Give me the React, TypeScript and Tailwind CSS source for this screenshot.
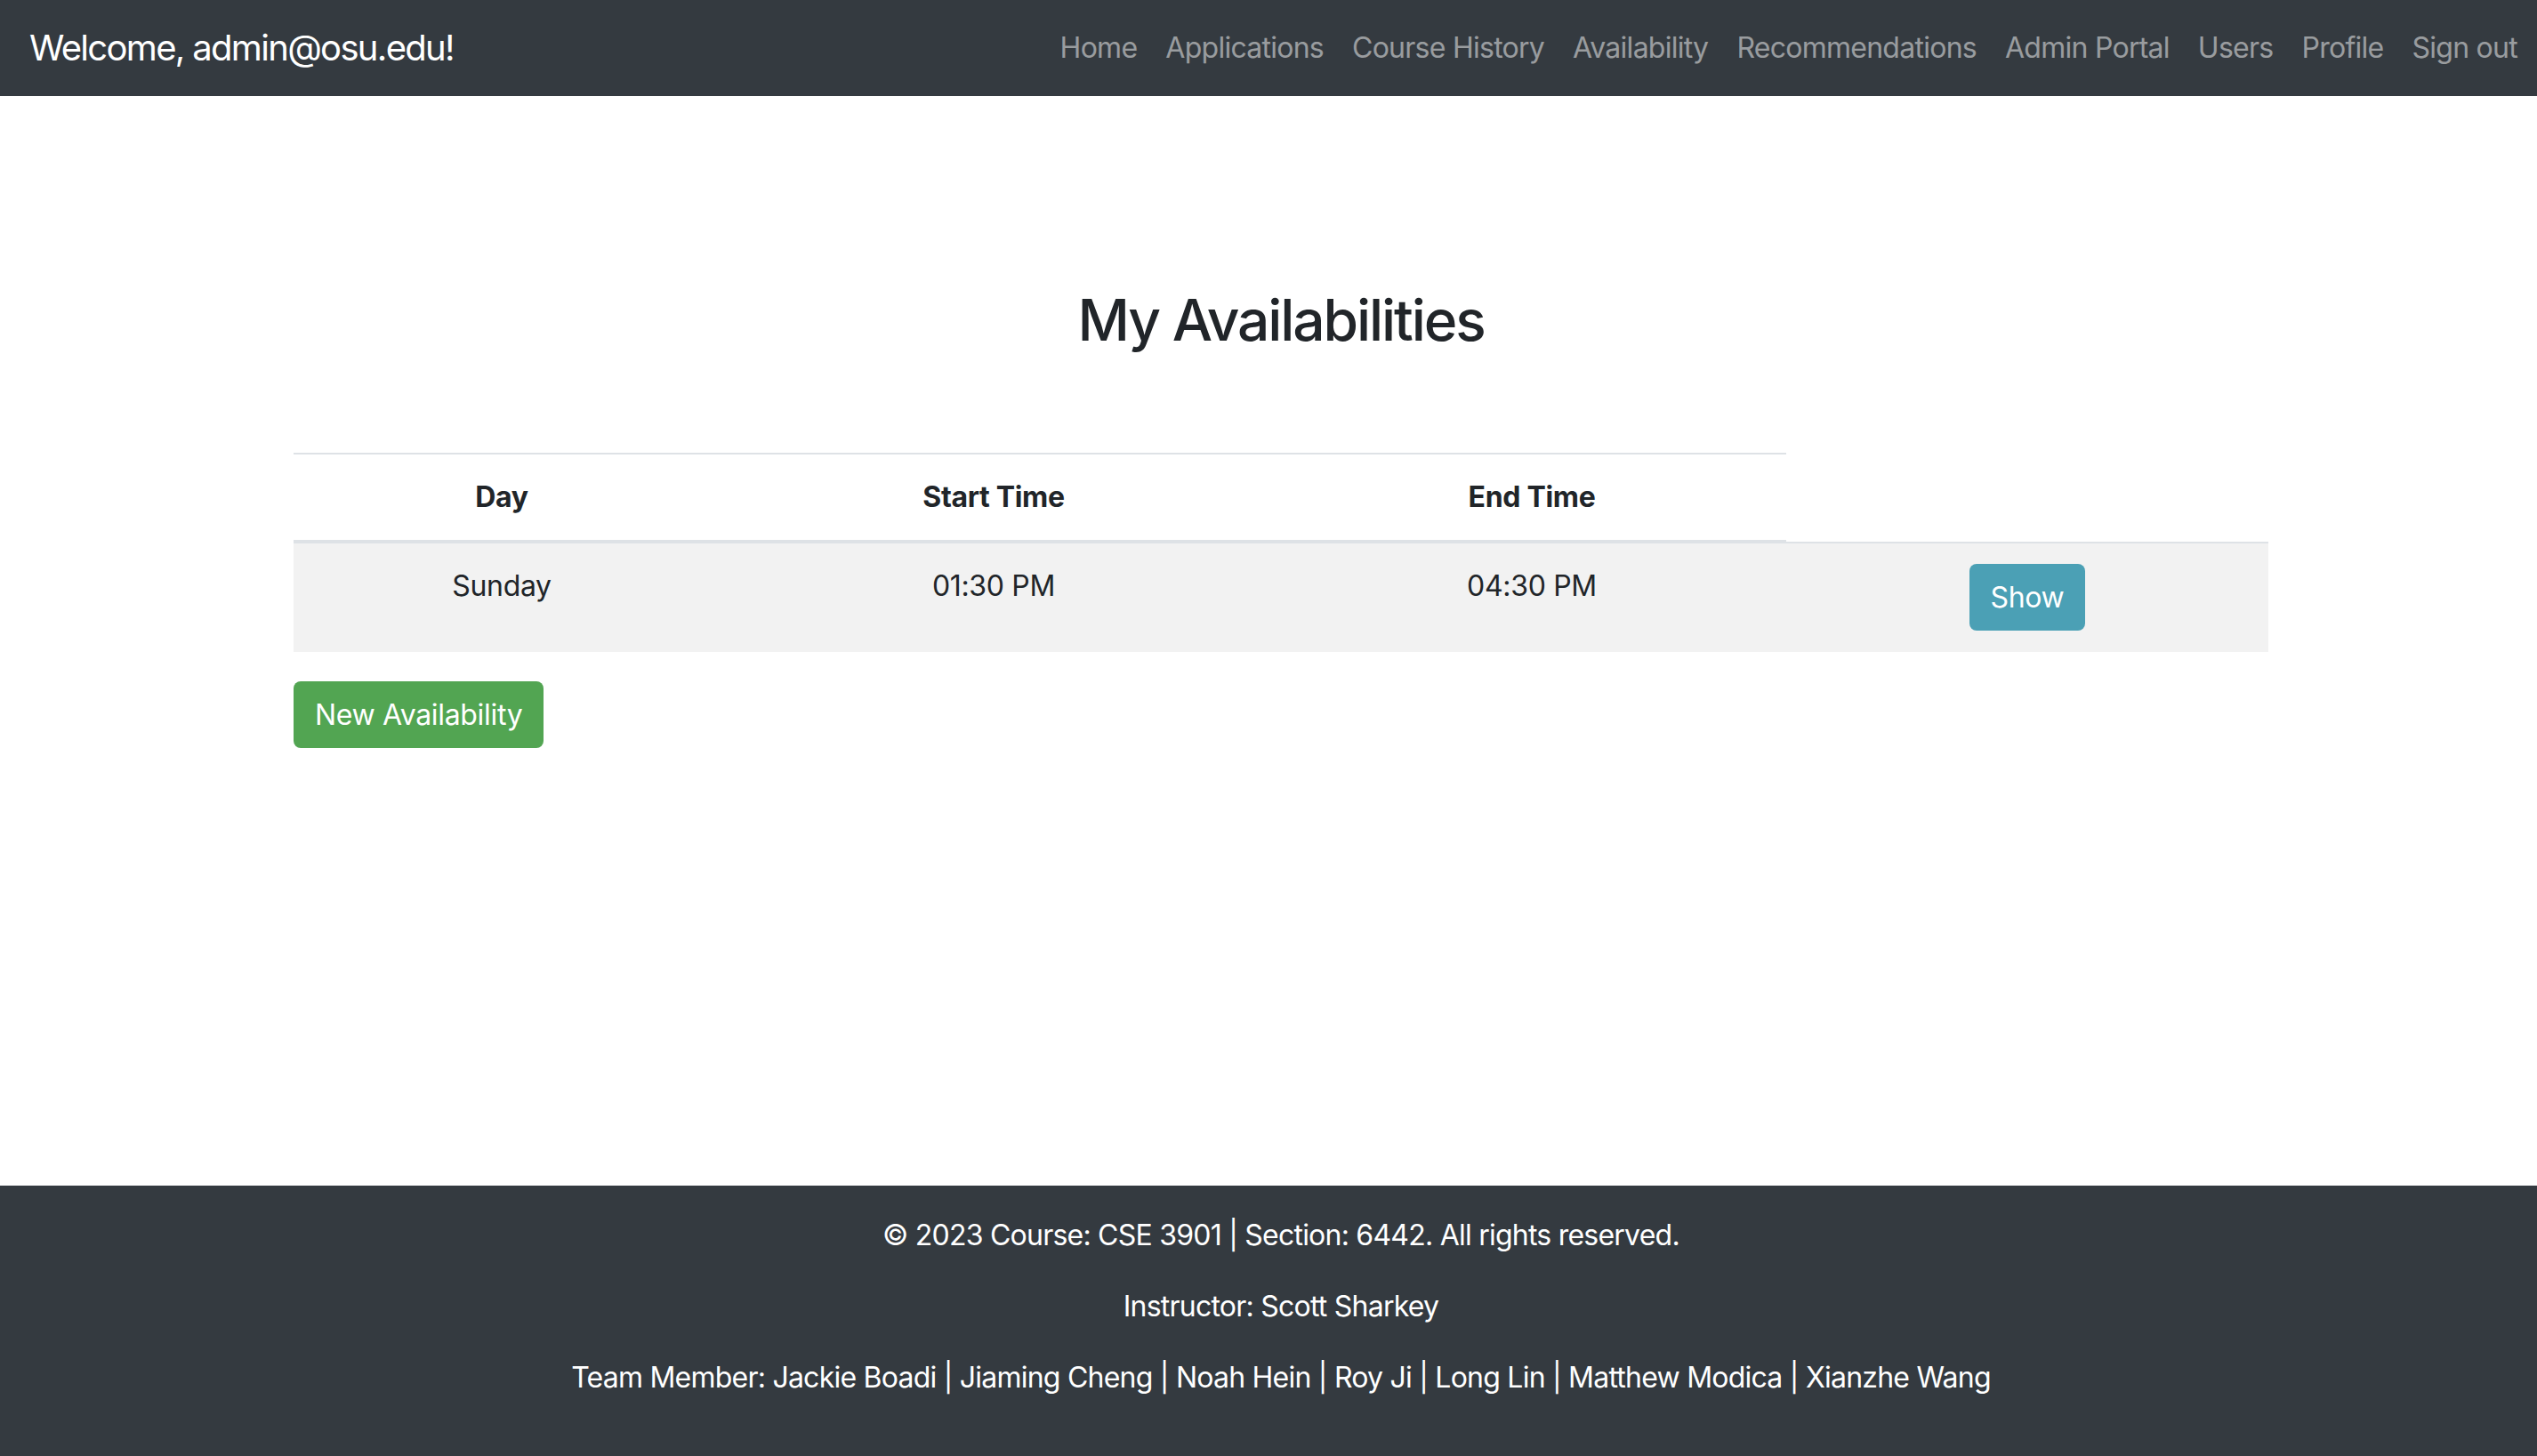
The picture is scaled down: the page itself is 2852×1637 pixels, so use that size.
import React from "react";

const links = [
  "Home",
  "Applications",
  "Course History",
  "Availability",
  "Recommendations",
  "Admin Portal",
  "Users",
  "Profile",
  "Sign out",
];

export default function App() {
  return (
    <div
      className="min-h-screen flex flex-col bg-white text-[#212529] tracking-[-0.02em]"
      style={{ fontFamily: "Inter, 'Open Sans', sans-serif" }}
    >
      <nav className="h-[108px] bg-[#343a40] flex items-center justify-between pl-[33px] pr-[6px]">
        <div className="text-white text-[40px] leading-[60px] tracking-[-0.042em]">Welcome, admin@osu.edu!</div>
        <div className="flex items-center">
          {links.map((l) => (
            <a key={l} className="px-[16px] text-[32px] leading-[48px] text-white/50 tracking-[-0.023em]">
              {l}
            </a>
          ))}
        </div>
      </nav>

      <main className="flex-1 pl-[330px] pr-[302px]">
        <h1 className="mt-[213px] text-center text-[64px] leading-[77px] font-medium tracking-[-0.033em]">
          My Availabilities
        </h1>

        <div className="mt-[111px] grid grid-cols-[468px_638px_572px_542px] text-[32px] leading-[48px]">
          <div className="border-t-2 border-b-2 border-[#dee2e6] p-[24px] text-center font-bold">Day</div>
          <div className="border-t-2 border-b-2 border-[#dee2e6] p-[24px] text-center font-bold">Start Time</div>
          <div className="border-t-2 border-b-2 border-[#dee2e6] p-[24px] text-center font-bold">End Time</div>
          <div></div>

          <div className="border-t-2 border-[#dee2e6] bg-[#f2f2f2] p-[24px] text-center">Sunday</div>
          <div className="border-t-2 border-[#dee2e6] bg-[#f2f2f2] p-[24px] text-center">01:30 PM</div>
          <div className="border-t-2 border-[#dee2e6] bg-[#f2f2f2] p-[24px] text-center">04:30 PM</div>
          <div className="border-t-2 border-[#dee2e6] bg-[#f2f2f2] pt-[23px] pb-[24px] flex justify-center">
            <button className="h-[75px] px-[24px] rounded-[8px] bg-[#4ba0b5] text-white text-[32px]">
              Show
            </button>
          </div>
        </div>

        <button className="mt-[33px] h-[75px] px-[24px] rounded-[8px] bg-[#52a552] text-white text-[32px]">
          New Availability
        </button>
      </main>

      <footer className="bg-[#343a40] text-white text-[32px] leading-[48px] text-center pt-[32px] pb-[32px] pl-[330px] pr-[302px] tracking-[-0.024em]">
        <p className="mb-[32px]">© 2023 Course: CSE 3901 | Section: 6442. All rights reserved.</p>
        <p className="mb-[32px]">Instructor: Scott Sharkey</p>
        <p className="mb-[32px]">
          Team Member: Jackie Boadi | Jiaming Cheng | Noah Hein | Roy Ji | Long Lin | Matthew Modica | Xianzhe Wang
        </p>
      </footer>
    </div>
  );
}
